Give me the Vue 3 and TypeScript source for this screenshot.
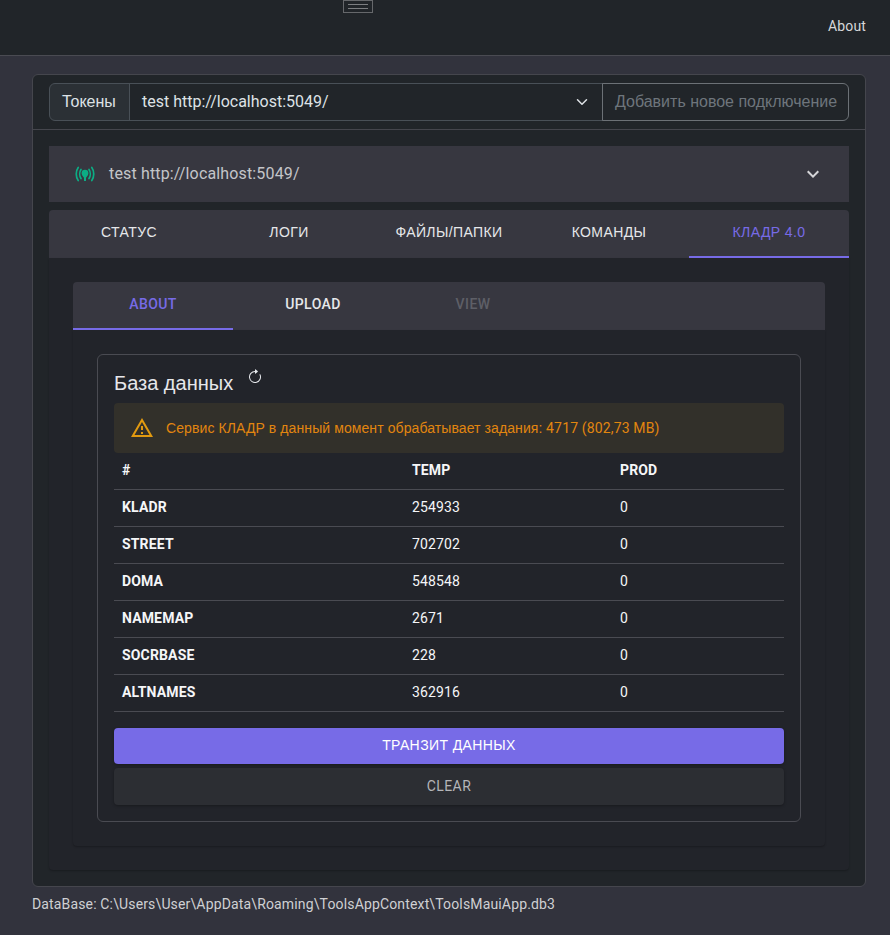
<script setup lang="ts">
const tabs = ['Статус', 'Логи', 'Файлы/папки', 'Команды', 'Кладр 4.0'];
const subTabs = ['About', 'Upload', 'View'];

const rows = [
  { name: 'KLADR', temp: 254933, prod: 0 },
  { name: 'STREET', temp: 702702, prod: 0 },
  { name: 'DOMA', temp: 548548, prod: 0 },
  { name: 'NAMEMAP', temp: 2671, prod: 0 },
  { name: 'SOCRBASE', temp: 228, prod: 0 },
  { name: 'ALTNAMES', temp: 362916, prod: 0 },
];
</script>

<template>
  <div class="page">
    <header class="topbar">
      <button class="toggler"><span class="toggler-bars"></span></button>
      <a class="about">About</a>
    </header>

    <main class="content">
      <section class="main-card">
        <div class="card-head">
          <div class="input-group">
            <span class="group-label cyr">Токены</span>
            <div class="group-select">
              <span class="select-value">test http://localhost:5049/</span>
              <svg class="select-caret" viewBox="0 0 16 16" width="16" height="16">
                <path d="M2 5l6 6 6-6" fill="none" stroke="#dee2e6" stroke-width="2" stroke-linecap="round" stroke-linejoin="round" />
              </svg>
            </div>
            <span class="group-input cyr">Добавить новое подключение</span>
          </div>
        </div>

        <div class="card-body">
          <div class="panel-head">
            <svg class="antenna" viewBox="0 0 24 24" width="24" height="24">
              <g fill="none" stroke="#0cad84" stroke-width="1.7" stroke-linecap="round">
                <path d="M5.2 5.5C2.6 9.2 2.6 14.8 5.2 18.5" />
                <path d="M8 7.5C6.3 10 6.3 14 8 16.5" />
                <path d="M18.8 5.5C21.4 9.2 21.4 14.8 18.8 18.5" />
                <path d="M16 7.5C17.7 10 17.7 14 16 16.5" />
              </g>
              <path fill="#0cad84" d="M12 7.8a3.4 3.4 0 0 1 3.4 3.4c0 1.8-1.4 3-2.4 4.6V19h-2v-3.2c-1-1.6-2.4-2.8-2.4-4.6A3.4 3.4 0 0 1 12 7.8z" />
            </svg>
            <span class="panel-title">test http://localhost:5049/</span>
            <svg class="expand" viewBox="0 0 24 24" width="24" height="24">
              <path fill="#d5d5d8" d="M16.59 8.59L12 13.17 7.41 8.59 6 10l6 6 6-6z" />
            </svg>
          </div>

          <nav class="tabs outer-tabs">
            <div v-for="(t, i) in tabs" :key="t" class="tab cyr" :class="{ active: i === 4 }">{{ t }}</div>
          </nav>

          <div class="tab-panel">
            <nav class="tabs inner-tabs">
              <div
                v-for="(t, i) in subTabs"
                :key="t"
                class="tab"
                :class="{ active: i === 0, disabled: i === 2 }"
              >{{ t }}</div>
            </nav>

            <div class="tab-panel inner-panel">
              <div class="db-card">
                <div class="db-title">
                  <h2 class="cyr">База данных</h2>
                  <svg class="refresh" viewBox="0 0 16 16" width="16" height="16">
                    <path fill="#e8eaee" fill-rule="evenodd" d="M8 3a5 5 0 1 0 4.546 2.914.5.5 0 0 1 .908-.417A6 6 0 1 1 8 2z" />
                    <path fill="#e8eaee" d="M8 4.466V.534a.25.25 0 0 1 .41-.192l2.36 1.966c.12.1.12.284 0 .384L8.41 4.658A.25.25 0 0 1 8 4.466" />
                  </svg>
                </div>

                <div class="alert">
                  <svg viewBox="0 0 24 24" width="24" height="24">
                    <path fill="#e29a10" d="M12 5.99L19.53 19H4.47L12 5.99M12 2L1 21h22L12 2zm1 14h-2v2h2v-2zm0-6h-2v4h2v-4z" />
                  </svg>
                  <span class="alert-text"><span class="cyr">Сервис КЛАДР в данный момент обрабатывает задания:</span> 4717 (802,73 MB)</span>
                </div>

                <div class="table">
                  <div class="row head">
                    <div>#</div>
                    <div>TEMP</div>
                    <div>PROD</div>
                  </div>
                  <div v-for="r in rows" :key="r.name" class="row">
                    <div class="name">{{ r.name }}</div>
                    <div>{{ r.temp }}</div>
                    <div>{{ r.prod }}</div>
                  </div>
                </div>

                <button class="btn primary cyr">Транзит данных</button>
                <button class="btn clear">Clear</button>
              </div>
            </div>
          </div>
        </div>
      </section>

      <footer class="db-path">DataBase: C:\Users\User\AppData\Roaming\ToolsAppContext\ToolsMauiApp.db3</footer>
    </main>
  </div>
</template>

<style>
html, body {
  background: #32333d;
}
</style>

<style scoped>
.page {
  height: 935px;
  overflow: hidden;
  font-family: Roboto, "Liberation Sans", sans-serif;
  font-size: 14px;
  letter-spacing: 0.15px;
  color: #e6e7ea;
  background: #32333d;
}
/* cyrillic in the original falls back to an arial-like face */
.cyr {
  font-family: "Liberation Sans", Arial, sans-serif;
}

.topbar {
  position: relative;
  height: 56px;
  box-sizing: border-box;
  display: flex;
  justify-content: flex-end;
  align-items: center;
  padding: 0 24px 3px;
  background: #212529;
  border-bottom: 1px solid #4a4b52;
}
.toggler {
  position: absolute;
  left: 343px;
  top: 0;
  width: 30px;
  height: 13px;
  padding: 0;
  box-sizing: border-box;
  display: flex;
  align-items: center;
  justify-content: center;
  background: none;
  border: 1px solid #66686b;
}
.toggler-bars {
  width: 20px;
  height: 3px;
  border-top: 1px solid #7c7e81;
  border-bottom: 1px solid #7c7e81;
}
.about {
  color: #d6d7da;
}

.content {
  padding: 18px 24px 0 32px;
}
.main-card {
  height: 813px;
  box-sizing: border-box;
  background: #212529;
  border: 1px solid #45464d;
  border-radius: 6px;
}
.card-head {
  padding: 8px 16px;
  border-bottom: 1px solid #45464d;
}
.input-group {
  display: flex;
  height: 38px;
  font-size: 16px;
  letter-spacing: 0;
}
.group-label {
  display: flex;
  align-items: center;
  box-sizing: border-box;
  width: 81px;
  padding: 0 12px;
  background: #2b3035;
  border: 1px solid #495057;
  border-radius: 6px 0 0 6px;
  color: #dee2e6;
}
.group-select {
  flex: 1;
  display: flex;
  align-items: center;
  justify-content: space-between;
  padding: 0 12px;
  margin-left: -1px;
  border: 1px solid #495057;
  color: #dee2e6;
}
.select-value {
  margin-top: -2px;
}
.select-caret {
  width: 12px;
  height: 12px;
  margin-right: 2px;
}
.group-input {
  display: flex;
  align-items: center;
  box-sizing: border-box;
  width: 247px;
  padding: 0 12px;
  margin-left: -1px;
  border: 1px solid #6c7176;
  border-radius: 0 6px 6px 0;
  color: #6e757c;
  white-space: nowrap;
}

.card-body {
  padding: 16px 16px 0;
}
.panel-head {
  display: flex;
  align-items: center;
  height: 56px;
  padding: 0 24px;
  background: #373740;
  font-size: 16px;
  color: #c4c5c9;
}
.antenna {
  margin-right: 12px;
}
.panel-title {
  flex: 1;
  margin-top: -2px;
}

.tabs {
  display: flex;
  background: #373740;
  border-radius: 4px 4px 0 0;
  font-weight: 500;
}
.outer-tabs {
  margin-top: 8px;
}
.tab {
  width: 160px;
  height: 48px;
  box-sizing: border-box;
  display: flex;
  align-items: center;
  justify-content: center;
  padding-bottom: 4px;
  text-transform: uppercase;
  letter-spacing: 0.4px;
  color: #e6e7ea;
}
.outer-tabs .tab {
  font-weight: 400;
}
.tab.active {
  color: #776be7;
  border-bottom: 2px solid #776be7;
  padding-bottom: 2px;
}
.tab.disabled {
  color: #5e5f67;
}

.tab-panel {
  height: 612px;
  box-sizing: border-box;
  padding: 24px;
  background: #22242a;
  border-radius: 0 0 4px 4px;
  box-shadow: 0 1px 2px rgba(0, 0, 0, 0.25);
}
.inner-panel {
  height: 516px;
}

.db-card {
  height: 468px;
  box-sizing: border-box;
  padding: 16px;
  border: 1px solid #4a4b52;
  border-radius: 6px;
}
.db-title {
  display: flex;
  align-items: flex-start;
  height: 32px;
}
.db-title h2 {
  margin: 0;
  font-size: 20px;
  font-weight: 400;
  line-height: 24px;
  letter-spacing: 0;
  color: #e6e7ea;
}
.refresh {
  margin: -2px 0 0 14px;
}

.alert {
  display: flex;
  align-items: center;
  height: 50px;
  box-sizing: border-box;
  padding: 0 16px;
  gap: 12px;
  background: #32302a;
  border-radius: 4px;
  color: #e2860f;
}
.alert svg {
  flex: none;
}
.alert-text {
  margin-top: -1px;
}
.alert-text .cyr {
  letter-spacing: 0.09px;
}

.row {
  display: grid;
  grid-template-columns: 290px 208px 1fr;
  height: 37px;
  box-sizing: border-box;
  align-items: center;
  padding: 0 0 2px 8px;
  border-bottom: 1px solid #4a4b52;
  color: #f5f6f8;
  font-weight: 400;
}
.row.head {
  font-weight: 700;
}
.name {
  font-weight: 700;
}

.btn {
  display: block;
  width: 100%;
  border: 0;
  padding: 0 0 2px;
  border-radius: 4px;
  font-size: 14px;
  text-transform: uppercase;
  letter-spacing: 0.4px;
  box-shadow: 0 1px 3px rgba(0, 0, 0, 0.3);
}
.primary {
  height: 36px;
  margin-top: 16px;
  background: #776be7;
  color: #fff;
}
.clear {
  height: 37px;
  margin-top: 4px;
  font-family: inherit;
  background: #2c2e33;
  color: #b4b5b8;
}

.db-path {
  margin-top: 7px;
  line-height: 20px;
  color: #cfd0d3;
}
</style>
